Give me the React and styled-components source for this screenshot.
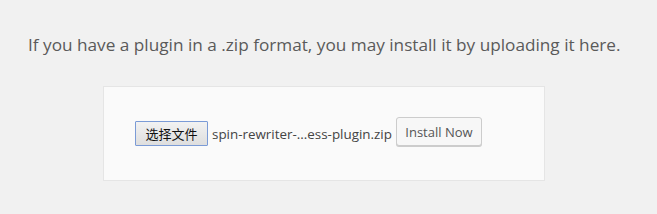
import styled, { createGlobalStyle } from "styled-components";

const Global = createGlobalStyle`
  html, body {
    margin: 0;
    background: #f1f1f1;
  }
`;

export default function App() {
  return (
    <Page>
      <Global />
      <Intro>
        If you have a plugin in a .zip format, you may install it by uploading it here.
      </Intro>
      <Card>
        <FilePick>
          <ChooseButton>选择文件</ChooseButton>
          <FileName>spin-rewriter-...ess-plugin.zip</FileName>
        </FilePick>
        <InstallButton>Install Now</InstallButton>
      </Card>
    </Page>
  );
}

const Page = styled.div`
  padding: 33px 0 0 0;
  min-height: 214px;
  box-sizing: border-box;
`;

const Intro = styled.p`
  margin: 0 0 0 28px;
  font-family: "Open Sans", "Noto Sans", sans-serif;
  font-size: 17.2px;
  line-height: 24px;
  color: #5a5a5a;
  white-space: nowrap;
`;

const Card = styled.div`
  margin: 29px 0 0 103px;
  background: #fafafa;
  border: 1px solid #e5e5e5;
  display: flex;
  align-items: center;
  padding: 0 0 4px 31px;
  box-sizing: border-box;
  width: 442px;
  height: 95px;
`;

const FilePick = styled.div`
  display: flex;
  align-items: center;
  gap: 4px;
  margin-top: 4px;
`;

const ChooseButton = styled.span`
  display: inline-flex;
  align-items: center;
  justify-content: center;
  width: 73px;
  height: 25px;
  box-sizing: border-box;
  border: 1px solid #7b9bd6;
  border-radius: 1px;
  background: linear-gradient(#f2f2f2, #dedede);
  font-family: "Noto Sans CJK SC", sans-serif;
  font-size: 13px;
  color: #111;
`;

const FileName = styled.span`
  font-family: "Open Sans", "Noto Sans", sans-serif;
  font-size: 13.4px;
  color: #444;
`;

const InstallButton = styled.span`
  display: inline-flex;
  align-items: center;
  justify-content: center;
  margin-left: 4px;
  width: 86px;
  height: 29px;
  box-sizing: border-box;
  border: 1px solid #cccccc;
  border-radius: 3px;
  background: #f7f7f7;
  box-shadow: 0 1px 0 #cccccc;
  font-family: "Open Sans", "Noto Sans", sans-serif;
  font-size: 13px;
  color: #555;
`;
